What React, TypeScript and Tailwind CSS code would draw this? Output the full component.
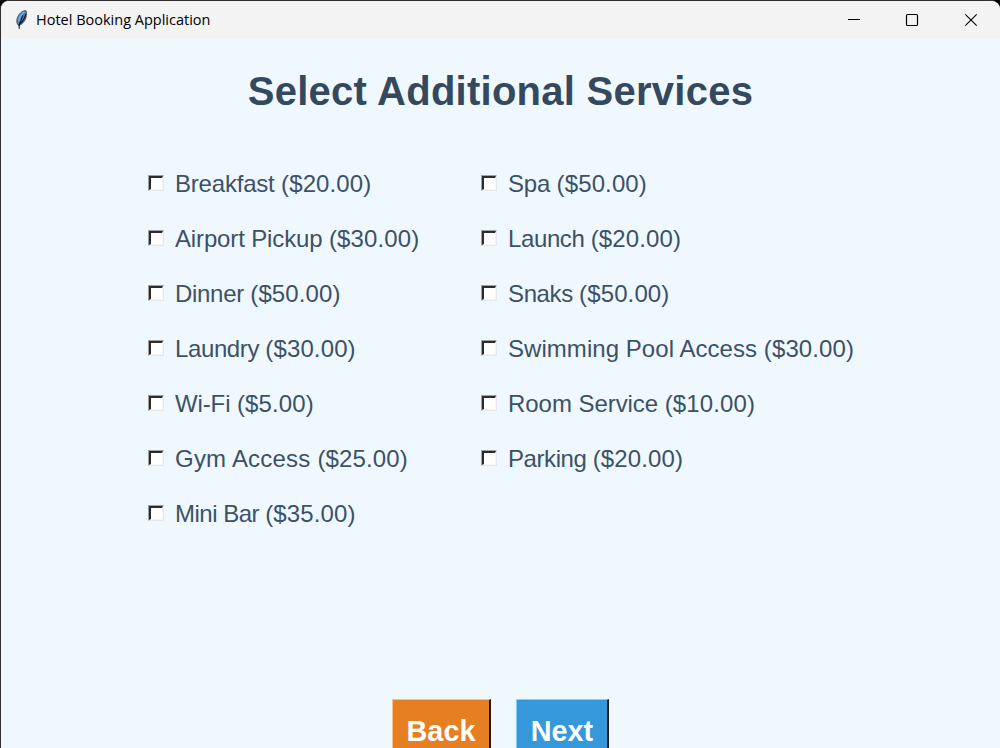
type Item = [name: string, price: string, tracking: string];

const left: Item[] = [
  ['Breakfast', '($20.00)', 'tracking-[-0.2px]'],
  ['Airport Pickup', '($30.00)', 'tracking-[-0.14px]'],
  ['Dinner', '($50.00)', 'tracking-[-0.3px]'],
  ['Laundry', '($30.00)', 'tracking-[-0.38px]'],
  ['Wi-Fi', '($5.00)', 'tracking-[-0.12px]'],
  ['Gym Access', '($25.00)', 'tracking-[0.22px]'],
  ['Mini Bar', '($35.00)', 'tracking-[-0.5px]'],
];

const right: Item[] = [
  ['Spa', '($50.00)', 'tracking-[-0.2px]'],
  ['Launch', '($20.00)', 'tracking-[-0.38px]'],
  ['Snaks', '($50.00)', 'tracking-[-0.38px]'],
  ['Swimming Pool Access', '($30.00)', 'tracking-[0.05px]'],
  ['Room Service', '($10.00)', 'tracking-[-0.05px]'],
  ['Parking', '($20.00)', 'tracking-[-0.42px]'],
];

function Service({ item: [name, price, tracking] }: { item: Item }) {
  return (
    <label className="flex h-[55px] items-center whitespace-nowrap">
      <span className="mr-[11px] size-4 shrink-0 border border-t-[#a0a0a0] border-l-[#a0a0a0] border-r-[#e3e8ec] border-b-[#e3e8ec]">
        <span className="block size-full border-t-2 border-l-2 border-t-[#2c2c2c] border-l-[#2c2c2c] border-r border-b border-r-[#f6f6f6] border-b-[#f6f6f6] bg-white" />
      </span>
      <span className="pt-[2px] text-[24px] leading-[28px] text-[#3d5166]">
        <span className={tracking}>{name + ' '}</span>
        <span className="tracking-[0.12px]">{price}</span>
      </span>
    </label>
  );
}

function Feather() {
  return (
    <svg className="ml-[13px] h-5 w-4 shrink-0" viewBox="0 0 16 20" fill="none">
      <path d="M11.8 0.5C8 0.8 4.2 4.2 3 9C2.5 11.5 2.9 13.8 4.6 15.6C8 14.5 11 11.5 12 7.5C12.6 4.8 12.8 2.2 11.8 0.5Z" fill="#4480c4" stroke="#50545b" strokeWidth="1" />
      <path d="M10.3 2C7.5 4 5.3 7.4 4.6 11" stroke="#78b4f0" strokeWidth="1.5" />
      <path d="M11.8 3.8C11.3 7 8.6 11.5 5.2 14.6V18.8M8.8 5.4L7 10.4L5.3 14.5" stroke="#141619" strokeWidth="1.1" />
    </svg>
  );
}

export default function App() {
  return (
    <div className="h-[748px] w-[1000px] overflow-hidden bg-black font-['Liberation_Sans',Arial,sans-serif] text-[#34495e]">
      <div className="flex h-full flex-col overflow-hidden rounded-t-[9px] border-t border-l border-[#302e30] bg-[#f0f8ff]">
        <header className="flex h-[38px] shrink-0 items-center bg-[#f3f3f3] text-black">
          <Feather />
          <span className="ml-[6px] font-['Open_Sans',sans-serif] text-[14.5px] leading-5">Hotel Booking Application</span>
          <svg className="ml-auto h-[38px] w-[174px]" viewBox="0 0 174 38" fill="none" stroke="#000">
            <path d="M22 18.5H34" />
            <rect x="80.5" y="13.5" width="11" height="11" rx="1" strokeWidth="1.2" />
            <path d="M139.3 13.3L150.7 24.7M150.7 13.3L139.3 24.7" strokeWidth="1.1" />
          </svg>
        </header>
        <h1 className="mt-[29px] text-center text-[40px] leading-[46px] font-bold tracking-[0.26px]">Select Additional Services</h1>
        <main className="mt-[41px] grid grid-cols-[333px_400px] pl-[147px]">
          <div className="flex flex-col">
            {left.map((item) => <Service key={item[0]} item={item} />)}
          </div>
          <div className="flex flex-col">
            {right.map((item) => <Service key={item[0]} item={item} />)}
          </div>
        </main>
        <footer className="mt-auto flex h-[49px] shrink-0 gap-[25px] pl-[391px] text-[28.8px] leading-[32px] font-bold text-white">
          <button className="h-[65px] w-[99px] border-t border-r-2 border-b-2 border-l border-t-[#f6c08c] border-r-[#1c1c1c] border-b-[#1c1c1c] border-l-[#f6c08c] bg-[#e67e22]">Back</button>
          <button className="h-[65px] w-[93px] border-t border-r-2 border-b-2 border-l border-t-[#7ed0ff] border-r-[#1c1c1c] border-b-[#1c1c1c] border-l-[#7ed0ff] bg-[#3498db]">Next</button>
        </footer>
      </div>
    </div>
  );
}
